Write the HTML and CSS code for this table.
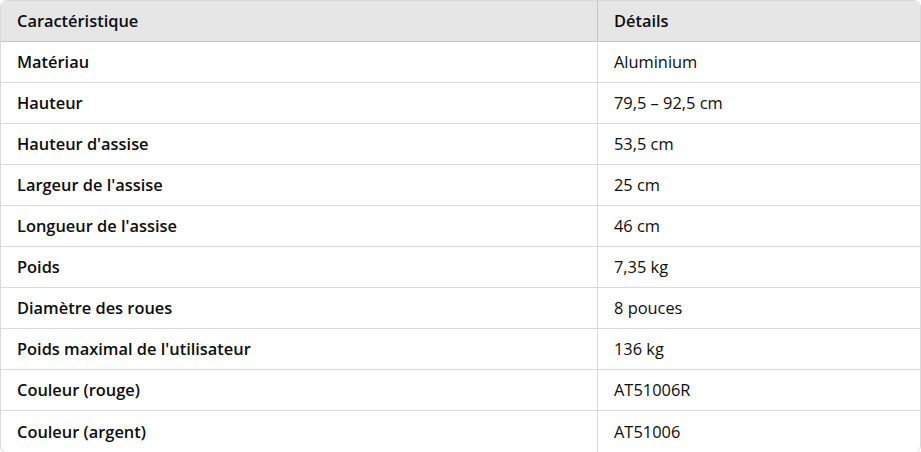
FILE: index.html
```html
<!DOCTYPE html>
<html lang="fr">
<head>
<meta charset="utf-8">
<link rel="stylesheet" href="styles.css">
</head>
<body>
<div class="wrap">
<table class="spec">
<thead>
<tr><th class="c1">Caractéristique</th><th>Détails</th></tr>
</thead>
<tbody>
<tr><td class="c1">Matériau</td><td>Aluminium</td></tr>
<tr><td class="c1">Hauteur</td><td>79,5 – 92,5 cm</td></tr>
<tr><td class="c1">Hauteur d'assise</td><td>53,5 cm</td></tr>
<tr><td class="c1">Largeur de l'assise</td><td>25 cm</td></tr>
<tr><td class="c1">Longueur de l'assise</td><td>46 cm</td></tr>
<tr><td class="c1">Poids</td><td>7,35 kg</td></tr>
<tr><td class="c1">Diamètre des roues</td><td>8 pouces</td></tr>
<tr><td class="c1">Poids maximal de l'utilisateur</td><td>136 kg</td></tr>
<tr><td class="c1">Couleur (rouge)</td><td>AT51006R</td></tr>
<tr><td class="c1">Couleur (argent)</td><td>AT51006</td></tr>
</tbody>
</table>
</div>
</body>
</html>
```
FILE: styles.css
```css
html, body {
  margin: 0;
  padding: 0;
  background: #ffffff;
}
.wrap {
  width: 921px;
  height: 452px;
  overflow: hidden;
}
.spec {
  width: 921px;
  border-collapse: separate;
  border-spacing: 0;
  border: 1px solid #d9d9d9;
  border-radius: 7px;
  overflow: hidden;
  font-family: "Open Sans", "Noto Sans", sans-serif;
  font-size: 16.4px;
  color: #0d0d0d;
  table-layout: fixed;
}
.spec th, .spec td {
  height: 41px;
  padding: 0 16px;
  text-align: left;
  vertical-align: middle;
  box-sizing: border-box;
  line-height: 22px;
}
.spec th {
  background: #e6e6e6;
  font-weight: 600;
  border-bottom: 1px solid #c4c4c4;
}
.spec th.c1 {
  width: 597px;
  border-right: 1px solid #c4c4c4;
}
.spec td {
  font-weight: 400;
  border-bottom: 1px solid #d9d9d9;
}
.spec td.c1 {
  font-weight: 600;
  border-right: 1px solid #d9d9d9;
}
.spec tbody tr:last-child td {
  border-bottom: none;
}
```
